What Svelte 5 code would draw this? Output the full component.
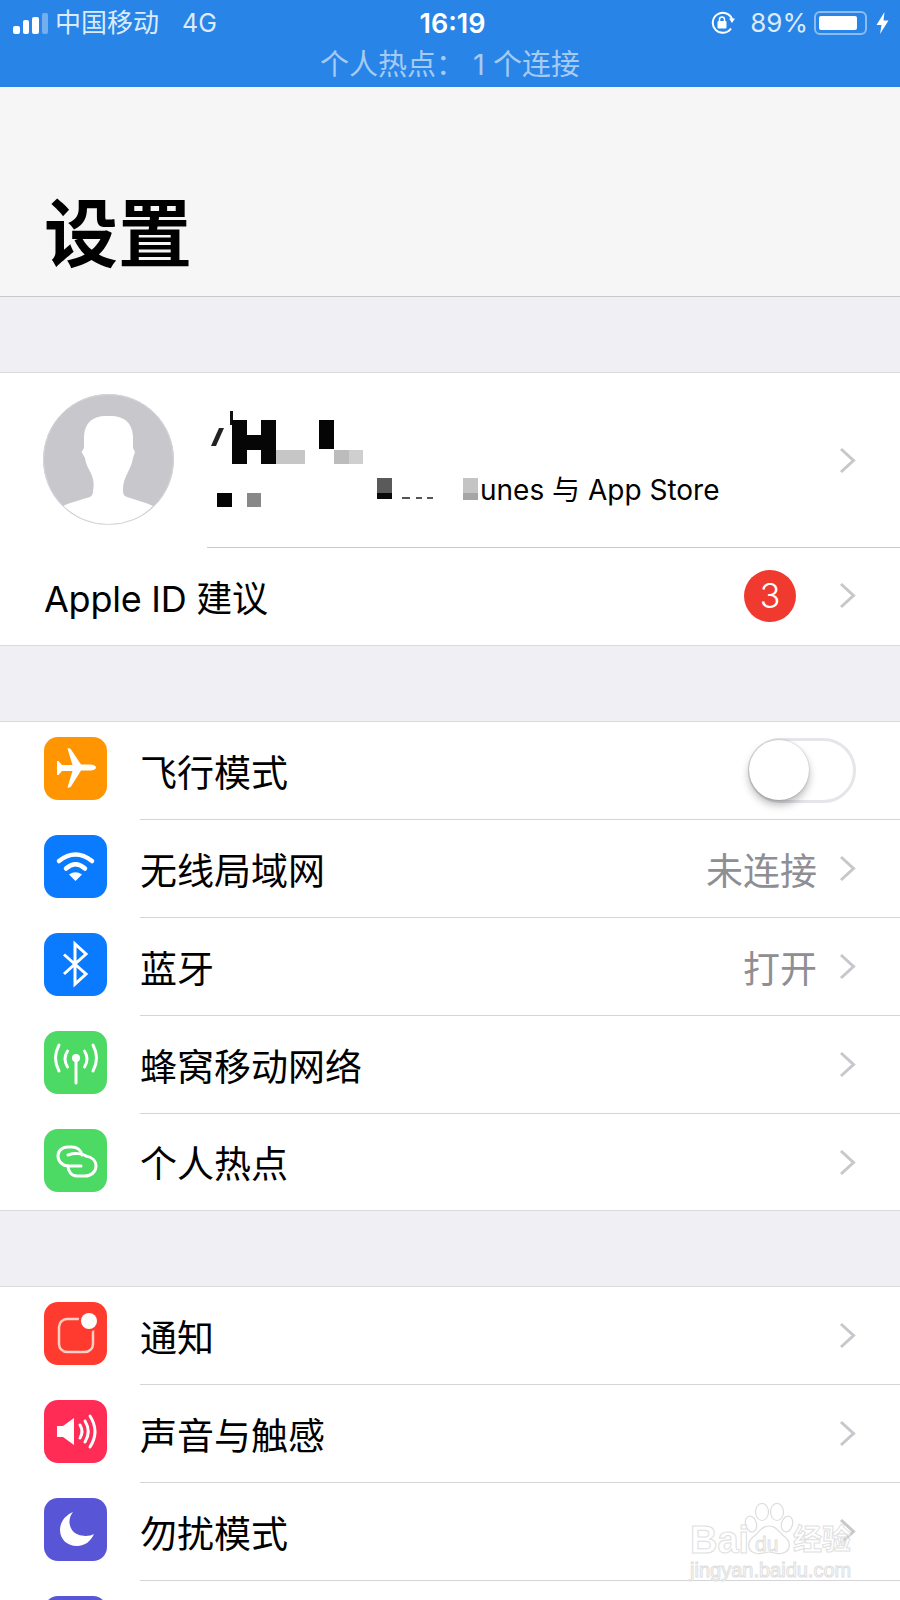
<script lang="ts">
	// pixelated redaction over the profile text
	const blocks = [
		{ x: 215, y: 428, w: 5, h: 18, c: '#222', r: 'skewX(-24deg)' },
		{ x: 230, y: 411, w: 3, h: 14, c: '#111' },
		{ x: 232, y: 420, w: 15, h: 44, c: '#060606' },
		{ x: 247, y: 435, w: 14, h: 15, c: '#060606' },
		{ x: 261, y: 420, w: 15, h: 44, c: '#060606' },
		{ x: 276, y: 450, w: 29, h: 14, c: '#c6c6c6' },
		{ x: 319, y: 420, w: 15, h: 29, c: '#050505' },
		{ x: 334, y: 450, w: 15, h: 14, c: '#bcbcbc' },
		{ x: 349, y: 450, w: 14, h: 14, c: '#cfcfcf' },
		{ x: 217, y: 493, w: 15, h: 14, c: '#050505' },
		{ x: 247, y: 493, w: 14, h: 14, c: '#888888' },
		{ x: 377, y: 478, w: 15, h: 15, c: '#5a5a5a' },
		{ x: 377, y: 493, w: 15, h: 6, c: '#0a0a0a' },
		{ x: 402, y: 497, w: 8, h: 2, c: '#555' },
		{ x: 416, y: 497, w: 6, h: 2, c: '#555' },
		{ x: 427, y: 497, w: 6, h: 2, c: '#555' },
		{ x: 463, y: 478, w: 15, h: 15, c: '#c4c4c4' },
		{ x: 463, y: 493, w: 15, h: 7, c: '#a6a6a6' }
	];

	const network = [
		{ key: 'plane', bg: '#ff9500', label: '飞行模式', toggle: true },
		{ key: 'wifi', bg: '#0a7aff', label: '无线局域网', value: '未连接' },
		{ key: 'bt', bg: '#0a7aff', label: '蓝牙', value: '打开' },
		{ key: 'cell', bg: '#4cd964', label: '蜂窝移动网络' },
		{ key: 'link', bg: '#4cd964', label: '个人热点' }
	];

	const system = [
		{ key: 'notify', bg: '#ff3b30', label: '通知' },
		{ key: 'sound', bg: '#ff2d55', label: '声音与触感' },
		{ key: 'moon', bg: '#5856d6', label: '勿扰模式' },
		{ key: 'none', bg: '#5856d6', label: '' }
	];
</script>

{#snippet chevron()}
	<svg class="chevron" viewBox="0 0 17 27" width="17" height="27">
		<path d="M2 2l12.5 11.5L2 25" fill="none" stroke="#c7c7cc" stroke-width="3" />
	</svg>
{/snippet}

{#snippet icon(key)}
	<svg viewBox="0 0 63 63" width="63" height="63">
		{#if key === 'plane'}
			<path fill="#fff" d="M52 30.5c0-1.7-3-3-6-3h-9L27 12.500c-.6-1-2.800-1.500-3.500-1l5 16.500H18l-3.500-4H13v14h1.500l3.500-4h10.500l-5 16.500c.7.500 2.900 0 3.500-1L37 33.500h9c3 0 6-1.300 6-3z" />
		{:else if key === 'wifi'}
			<g fill="none" stroke="#fff" stroke-width="4.500" stroke-linecap="round">
				<path d="M15 26Q31.500 13 48 26" />
				<path d="M22 33.500Q31.500 25 41 33.500" />
			</g>
			<path fill="#fff" d="M25 39.500Q31.500 35 38 39.500L31.500 46z" />
		{:else if key === 'bt'}
			<path fill="none" stroke="#fff" stroke-width="3" d="M20 21.500L42 41 31 51V11l11 10L20 41" />
		{:else if key === 'cell'}
			<g fill="none" stroke="#fff" stroke-width="3" stroke-linecap="round">
				<path d="M32 27v25" />
				<path d="M23.500 20Q18.500 28 23.500 36M40.500 20Q45.500 28 40.500 36" />
				<path d="M15 14Q8 27 15 40M49 14Q56 27 49 40" />
			</g>
			<circle cx="32" cy="27" r="4" fill="#fff" />
		{:else if key === 'link'}
			<g fill="none" stroke="#fff" stroke-width="3" stroke-linecap="round">
				<path d="M37 37H25C18 37 14 32 14 27C14 22 18 18 24 18H28C33 18 37 21 38 26" />
				<path d="M24 26C30 24 38 24 42 27C48 28 52 32 52 37C52 43 47 47 41 47H33C27 47 24 42 24 37" />
			</g>
		{:else if key === 'notify'}
			<rect x="15" y="17" width="34" height="33" rx="8" fill="none" stroke="#ffd0c6" stroke-width="2.500" />
			<circle cx="45" cy="19" r="10.500" fill="#ff3b30" />
			<circle cx="45" cy="19" r="8" fill="#fff" />
		{:else if key === 'sound'}
			<path fill="#fff" d="M13 26h6L30 18v27L19 37h-6z" />
			<g fill="none" stroke="#fff" stroke-width="3" stroke-linecap="round">
				<path d="M36 25Q40 31.500 36 38" />
				<path d="M41 21Q47.500 31.500 41 42" />
				<path d="M46 16Q56 31.500 46 47" />
			</g>
		{:else if key === 'moon'}
			<path fill="#fff" d="M29 14C20 18 16 25 16 32C16 41 23 48 33 48C41 48 47 43 50 36C45 39 33 39 28 32C24 26 25 19 29 14z" />
		{/if}
	</svg>
{/snippet}

{#snippet rows(items)}
	{#each items as row, i}
		<div class="row">
			<span class="tile" style:background={row.bg}>{@render icon(row.key)}</span>
			<div class="row-body" class:last={i === items.length - 1}>
				<span class="label">{row.label}</span>
				{#if row.toggle}
					<span class="switch"><span class="knob"></span></span>
				{:else}
					{#if row.value}<span class="value">{row.value}</span>{/if}
					{@render chevron()}
				{/if}
			</div>
		</div>
	{/each}
{/snippet}

<div class="phone">
	<header class="status">
		<div class="status-top">
			<div class="status-left">
				<span class="bars">
					<i class="b1"></i><i class="b2"></i><i class="b3"></i><i class="b4"></i>
				</span>
				<span>中国移动</span>
				<span class="net">4G</span>
			</div>
			<div class="clock">16:19</div>
			<div class="status-right">
				<svg viewBox="0 0 26 24" width="26" height="24">
					<path d="M21 17.500A10 10 0 1 1 22 8" fill="none" stroke="#fff" stroke-width="2" />
					<path d="M19 7.500h6L22 12z" fill="#fff" />
					<rect x="7.500" y="10" width="9" height="7.500" rx="1" fill="#fff" />
					<path d="M9.500 10V8.500a2.500 2.500 0 0 1 5 0V10" fill="none" stroke="#fff" stroke-width="1.500" />
				</svg>
				<span class="pct">89%</span>
				<span class="battery"><span class="charge"></span></span>
				<svg viewBox="0 0 15 24" width="15" height="24">
					<path d="M9.500 1L1.500 14h5L5 23l8.500-13.500h-5z" fill="#fff" />
				</svg>
			</div>
		</div>
		<div class="hotspot">个人热点： 1 个连接</div>
	</header>

	<div class="title-bar"><h1>设置</h1></div>

	<section class="group">
		<div class="profile">
			<svg class="avatar" viewBox="0 0 131 131" width="131" height="131">
				<circle cx="65.500" cy="65.500" r="65.500" fill="#c7c7cc" />
				<path fill="#fff" d="M65 22C52 21 42 27 41 42L41 54L38.500 58L42 64C43 72 47 76 49 82C51 88 51 92 50 97C50 100 49 102 47 103C38 106 28 108 20 112C35 125 50 131 65.500 131C82 131 97 125 110 112C102 108 92 106 84 103C81 102 80 100 80 96C80 90 81 86 84 80C87 74 89 70 90 64L92 58L90 54L90 42C89 27 79 21 65 22z" />
				<circle cx="65.500" cy="65.500" r="65" fill="none" stroke="#d6d6da" />
			</svg>
			<div class="profile-body">
				<span class="account">unes 与 App Store</span>
				{@render chevron()}
			</div>
		</div>
		<div class="suggest">
			<span class="label">Apple ID 建议</span>
			<span class="badge">3</span>
			{@render chevron()}
		</div>
	</section>

	<section class="group">{@render rows(network)}</section>
	<section class="group">{@render rows(system)}</section>

	{#each blocks as b}
		<i
			class="block"
			style:left="{b.x}px"
			style:top="{b.y}px"
			style:width="{b.w}px"
			style:height="{b.h}px"
			style:background={b.c}
			style:transform={b.r}
		></i>
	{/each}

	<div class="watermark">
		<svg class="paw" viewBox="0 0 50 54" width="50" height="54">
			<g fill="#fff" stroke="#ddd" stroke-width="1.200">
				<ellipse cx="7" cy="21" rx="5.500" ry="8" transform="rotate(-15 7 21)" />
				<ellipse cx="18" cy="9" rx="6.500" ry="8.500" />
				<ellipse cx="33" cy="9" rx="6.500" ry="8.500" />
				<ellipse cx="43" cy="21" rx="5.500" ry="8" transform="rotate(15 43 21)" />
				<path d="M25 23C17 23 15 30 9 34C3 39 3 48 11 50C17 52 21 49 25 49C29 49 33 52 39 50C47 48 47 39 41 34C35 30 33 23 25 23z" />
			</g>
		</svg>
		<span class="wm-bai">Bai</span>
		<span class="wm-du">du</span>
		<span class="wm-cn">经验</span>
		<span class="wm-url">jingyan.baidu.com</span>
	</div>
</div>

<style>
	:global(body) {
		margin: 0;
		background: #f0f0f4;
	}

	.phone {
		position: relative;
		width: 900px;
		height: 1600px;
		overflow: hidden;
		background: #f0f0f4;
		color: #000;
		font-family: Inter, 'Noto Sans CJK SC', sans-serif;
	}

	.status {
		height: 87px;
		box-sizing: border-box;
		background: #2884e6;
		color: #dcebfb;
		font-size: 26px;
		line-height: 1;
	}

	.status-top {
		display: grid;
		grid-template-columns: 1fr auto 1fr;
		align-items: center;
		height: 46px;
		padding: 0 10px 0 13px;
	}

	.status-left {
		display: flex;
		align-items: center;
		gap: 7px;
	}

	.net {
		margin-left: 16px;
		font-size: 25px;
	}

	.bars {
		display: flex;
		align-items: flex-end;
		gap: 3px;
		height: 21px;
	}

	.bars i {
		width: 6.500px;
		border-radius: 2px;
		background: #fff;
	}

	.b1 { height: 8px; }
	.b2 { height: 14px; }
	.b3 { height: 17px; }
	.b4 { height: 21px; opacity: 0.35; }

	.clock {
		color: #fff;
		font-weight: 600;
		font-size: 27px;
		margin-left: 2px;
	}

	.status-right {
		display: flex;
		align-items: center;
		justify-content: flex-end;
		gap: 8px;
	}

	.pct {
		margin-left: 6px;
		margin-right: -2px;
		font-size: 26px;
	}

	.battery {
		display: flex;
		box-sizing: border-box;
		width: 53px;
		height: 24px;
		padding: 3px;
		border: 2px solid #8dbdf0;
		border-radius: 6px;
	}

	.charge {
		width: 89%;
		border-radius: 2px;
		background: #fff;
	}

	.hotspot {
		text-align: center;
		font-size: 29px;
		color: #a5cbf3;
		padding-top: 4px;
	}

	.title-bar {
		display: flex;
		align-items: flex-end;
		box-sizing: border-box;
		height: 210px;
		padding: 0 0 17px 44px;
		background: #f6f6f7;
		border-bottom: 1px solid #c8c8cc;
	}

	h1 {
		margin: 0;
		font-size: 74px;
		font-weight: 700;
		line-height: 90px;
	}

	.group {
		margin-top: 75px;
		background: #fff;
		border-top: 1px solid #d9d9de;
		border-bottom: 1px solid #d9d9de;
	}

	.profile {
		display: flex;
		align-items: center;
		gap: 33px;
		height: 175px;
		padding-left: 43px;
		box-sizing: border-box;
	}

	.avatar {
		flex: none;
		margin-top: -2px;
	}

	.profile-body {
		position: relative;
		align-self: stretch;
		flex: 1;
		border-bottom: 1px solid #c8c8cc;
	}

	.profile-body .chevron {
		position: absolute;
		right: 44px;
		top: 74px;
	}

	.account {
		position: absolute;
		left: 273px;
		top: 99px;
		font-size: 28px;
		line-height: 36px;
		white-space: nowrap;
	}

	.row {
		display: flex;
		align-items: center;
		height: 98px;
		padding-left: 44px;
		box-sizing: border-box;
	}

	.row:last-child {
		height: 96px;
	}

	.suggest {
		display: flex;
		align-items: center;
		height: 97px;
		padding: 0 44px 2px;
		box-sizing: border-box;
	}

	.suggest .label {
		margin-right: auto;
		font-size: 36px;
		letter-spacing: -0.25px;
	}

	.tile {
		flex: none;
		display: block;
		width: 63px;
		height: 63px;
		margin-top: -5px;
		border-radius: 14px;
		overflow: hidden;
	}

	.row:last-child .tile {
		margin-top: -3px;
	}

	.tile svg {
		display: block;
	}

	.row-body {
		flex: 1;
		align-self: stretch;
		display: flex;
		align-items: center;
		margin-left: 33px;
		padding-right: 44px;
		border-bottom: 1px solid #d4d4d8;
	}

	.row-body.last {
		border-bottom: 0;
	}

	.row-body .label {
		margin-right: auto;
		font-size: 37px;
		white-space: nowrap;
	}

	.value {
		margin-right: 22px;
		font-size: 37px;
		color: #8e8e93;
	}

	.chevron {
		flex: none;
		display: block;
	}

	.badge {
		display: flex;
		align-items: center;
		justify-content: center;
		width: 52px;
		height: 52px;
		margin-right: 43px;
		border-radius: 50%;
		background: #f03a30;
		color: #fff;
		font-size: 34px;
		font-weight: 300;
	}

	.switch {
		display: block;
		position: relative;
		box-sizing: border-box;
		width: 108px;
		height: 65px;
		border: 3px solid #e5e5ea;
		border-radius: 33px;
		background: #fff;
	}

	.knob {
		position: absolute;
		left: -2px;
		top: -1px;
		width: 60px;
		height: 60px;
		border-radius: 50%;
		background: #fff;
		box-shadow: 0 5px 9px rgb(0 0 0 / 0.28), 0 0 2px rgb(0 0 0 / 0.25);
	}

	.block {
		position: absolute;
		display: block;
	}

	.watermark {
		position: absolute;
		left: 0;
		top: 0;
		font-family: 'Liberation Sans', 'Noto Sans CJK SC', sans-serif;
		pointer-events: none;
	}

	.paw {
		position: absolute;
		left: 744px;
		top: 1503px;
	}

	.watermark span {
		position: absolute;
		white-space: nowrap;
		color: rgb(255 255 255 / 0.7);
		-webkit-text-stroke: 1px #e0e0e0;
		line-height: 1;
	}

	.wm-bai {
		left: 690px;
		top: 1521px;
		font-size: 38px;
		font-weight: 700;
	}

	.wm-du {
		left: 755px;
		top: 1533px;
		font-size: 21px;
	}

	.wm-cn {
		left: 793px;
		top: 1526px;
		font-size: 29px;
		font-weight: 700;
	}

	.wm-url {
		left: 690px;
		top: 1560px;
		font-size: 20px;
	}
</style>
